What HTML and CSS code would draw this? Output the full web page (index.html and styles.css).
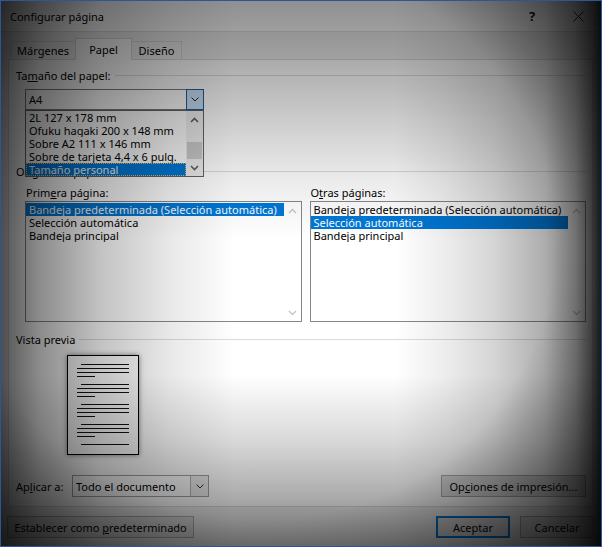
FILE: index.html
```
<!DOCTYPE html>
<html lang="es">
<head>
<meta charset="utf-8">
<title>Configurar página</title>
<link rel="stylesheet" href="styles.css">
</head>
<body>
<div class="dialog">
  <div class="titlebar">
    <span class="title">Configurar página</span>
    <span class="tb-btn help">?</span>
    <span class="tb-btn close"><svg width="11" height="11" viewBox="0 0 11 11"><path d="M0.5 0.5L10.5 10.5M10.5 0.5L0.5 10.5" fill="none" stroke="#222" stroke-width="1"/></svg></span>
  </div>

  <div class="tabs">
    <div class="tab t1">Márgenes</div>
    <div class="tab t2 active">Papel</div>
    <div class="tab t3">Diseño</div>
  </div>

  <div class="panel">
    <div class="group g1"><span>Ta<u>m</u>año del papel:</span><i class="rule"></i></div>

    <div class="combo-wrap">
      <div class="combo edit">
        <span class="value">A4</span>
        <span class="arrow hot"><svg width="8" height="5" viewBox="0 0 8 5"><path d="M0.5 0.5L4 4L7.5 0.5" fill="none" stroke="#1b2b3b" stroke-width="1"/></svg></span>
      </div>
      <div class="popup">
        <ul class="items">
          <li>2L 127 x 178 mm</li>
          <li>Ofuku hagaki 200 x 148 mm</li>
          <li>Sobre A2 111 x 146 mm</li>
          <li>Sobre de tarjeta 4,4 x 6 pulg.</li>
          <li class="sel focus">Tamaño personal</li>
        </ul>
        <div class="vscroll">
          <span class="sbtn"><svg width="9" height="6" viewBox="0 0 9 6"><path d="M1 5L4.5 1.5L8 5" fill="none" stroke="#606060" stroke-width="1.6"/></svg></span>
          <span class="track"><i class="thumb"></i></span>
          <span class="sbtn"><svg width="9" height="6" viewBox="0 0 9 6"><path d="M1 1L4.5 4.5L8 1" fill="none" stroke="#606060" stroke-width="1.6"/></svg></span>
        </div>
      </div>
    </div>

    <div class="group g2"><span>Origen del papel</span><i class="rule"></i></div>

    <div class="sources">
      <div class="col">
        <div class="lbl">Prim<u>e</u>ra página:</div>
        <div class="listbox">
          <ul class="items">
            <li class="sel">Bandeja predeterminada (Selección automática)</li>
            <li>Selección automática</li>
            <li>Bandeja principal</li>
          </ul>
          <div class="vscroll off">
            <span class="sbtn"><svg width="9" height="6" viewBox="0 0 9 6"><path d="M1 5L4.5 1.5L8 5" fill="none" stroke="#c6c6c6" stroke-width="1.4"/></svg></span>
            <span class="sbtn"><svg width="9" height="6" viewBox="0 0 9 6"><path d="M1 1L4.5 4.5L8 1" fill="none" stroke="#c6c6c6" stroke-width="1.4"/></svg></span>
          </div>
        </div>
      </div>
      <div class="col">
        <div class="lbl">O<u>t</u>ras páginas:</div>
        <div class="listbox">
          <ul class="items">
            <li>Bandeja predeterminada (Selección automática)</li>
            <li class="sel">Selección automática</li>
            <li>Bandeja principal</li>
          </ul>
          <div class="vscroll off">
            <span class="sbtn"><svg width="9" height="6" viewBox="0 0 9 6"><path d="M1 5L4.5 1.5L8 5" fill="none" stroke="#c6c6c6" stroke-width="1.4"/></svg></span>
            <span class="sbtn"><svg width="9" height="6" viewBox="0 0 9 6"><path d="M1 1L4.5 4.5L8 1" fill="none" stroke="#c6c6c6" stroke-width="1.4"/></svg></span>
          </div>
        </div>
      </div>
    </div>

    <div class="group g3"><span>Vista previa</span><i class="rule"></i></div>

    <svg class="page" width="72" height="100" viewBox="0 0 72 100">
      <rect x="0.5" y="0.5" width="71" height="99" fill="#fff" stroke="#000" stroke-width="1"/>
      <g fill="#111">
        <rect x="14" y="9" width="48" height="1"/>
        <rect x="10" y="13" width="52" height="1"/>
        <rect x="10" y="17" width="52" height="1"/>
        <rect x="10" y="21" width="18" height="1"/>
        <rect x="14" y="29" width="48" height="1"/>
        <rect x="10" y="33" width="52" height="1"/>
        <rect x="10" y="37" width="52" height="1"/>
        <rect x="10" y="41" width="18" height="1"/>
        <rect x="14" y="49" width="48" height="1"/>
        <rect x="10" y="53" width="52" height="1"/>
        <rect x="10" y="57" width="52" height="1"/>
        <rect x="10" y="61" width="18" height="1"/>
        <rect x="14" y="69" width="48" height="1"/>
        <rect x="10" y="73" width="52" height="1"/>
        <rect x="10" y="77" width="52" height="1"/>
        <rect x="10" y="81" width="18" height="1"/>
        <rect x="14" y="89" width="48" height="1"/>
      </g>
    </svg>

    <div class="apply">
      <span class="lbl">Ap<u>l</u>icar a:</span>
      <div class="combo list">
        <span class="value">Todo el documento</span>
        <span class="arrow"><svg width="8" height="5" viewBox="0 0 8 5"><path d="M0.5 0.5L4 4L7.5 0.5" fill="none" stroke="#303030" stroke-width="1"/></svg></span>
      </div>
      <button class="btn opts"><span>Op<u>c</u>iones de impresión...</span></button>
    </div>
  </div>

  <div class="footer">
    <button class="btn def"><span>Establecer como <u>p</u>redeterminado</span></button>
    <button class="btn ok"><span>Aceptar</span></button>
    <button class="btn cancel"><span>Cancelar</span></button>
  </div>

  <div class="vignette"></div>
</div>
</body>
</html>
```

FILE: styles.css
```
* { box-sizing: border-box; }
html, body { margin: 0; padding: 0; }
body { background: #fff; }

.dialog {
  position: relative;
  width: 602px;
  height: 547px;
  border: 1px solid #2b579a;
  background: #f0f0f0;
  font-family: "Noto Sans", "Open Sans", sans-serif;
  font-size: 11px;
  line-height: 13px;
  color: #000;
  overflow: hidden;
  display: flex;
  flex-direction: column;
}

u { text-decoration: underline; text-underline-offset: 1px; }

/* title bar */
.titlebar {
  flex: none;
  height: 31px;
  display: flex;
  align-items: center;
  background: #fff;
  border-bottom: 1px solid #dedede;
  padding-left: 9px;
}
.title { color: #000; }
.tb-btn {
  width: 46px;
  height: 30px;
  display: flex;
  align-items: center;
  justify-content: center;
}
.help { margin-left: auto; font-size: 13px; font-weight: bold; color: #111; }

/* tabs */
.tabs {
  flex: none;
  position: relative;
  z-index: 1;
  display: flex;
  align-items: flex-end;
  height: 22px;
  margin-top: 6px;
  margin-bottom: -1px;
  padding-left: 9px;
}
.tab {
  height: 19px;
  border: 1px solid #d9d9d9;
  background: #f0f0f0;
  display: flex;
  align-items: center;
  justify-content: center;
}
.t1 { width: 66px; }
.t2 { width: 57px; margin-left: -1px; }
.t3 { width: 51px; margin-left: -1px; }
.tab.active {
  position: relative;
  z-index: 2;
  height: 22px;
  background: #fff;
  border-bottom-color: #fff;
}

/* panel */
.panel {
  flex: none;
  height: 448px;
  margin: 0 8px 0 7px;
  border: 1px solid #d9d9d9;
  background: #fff;
  padding: 9px 6px 0 7px;
  display: flex;
  flex-direction: column;
}

.group {
  flex: none;
  display: flex;
  align-items: flex-start;
  height: 13px;
}
.group .rule {
  flex: 1;
  height: 1px;
  background: #dcdcdc;
  margin: 6px 0 0 4px;
}
.g2 { margin-top: 55px; }
.g3 { margin-top: 11px; }

/* combos */
.combo-wrap {
  position: relative;
  z-index: 3;
  flex: none;
  width: 179px;
  height: 21px;
  margin: 7px 0 0 9px;
}
.combo {
  display: flex;
  align-items: center;
  border: 1px solid #7a7a7a;
  background: #fff;
}
.combo.edit { height: 21px; }
.combo .value { flex: 1; padding-left: 3px; white-space: nowrap; }
.combo .arrow {
  display: flex;
  align-items: center;
  justify-content: center;
}
.combo .arrow.hot {
  width: 18px;
  height: 21px;
  margin: -1px -1px -1px 0;
  border: 1px solid #1a5e9f;
  background: #c9e0f5;
}

.popup {
  position: absolute;
  top: 100%;
  left: 0;
  width: 179px;
  height: 67px;
  border: 1px solid #646464;
  background: #fff;
  display: flex;
}
.items { list-style: none; margin: 0; padding: 0; flex: 1; }
.items li { height: 13px; padding-left: 3px; white-space: nowrap; overflow: hidden; }
.items li.sel { background: #0078d7; color: #fff; }
.items li.focus { outline: 1px dotted #e8c060; outline-offset: -1px; }

.vscroll {
  width: 17px;
  flex: none;
  display: flex;
  flex-direction: column;
  justify-content: space-between;
  background: #f0f0f0;
}
.vscroll.off { background: #fff; }
.sbtn {
  height: 17px;
  display: flex;
  align-items: center;
  justify-content: center;
}
.track {
  flex: 1;
  display: flex;
  flex-direction: column;
  justify-content: flex-end;
  align-items: center;
}
.thumb { display: block; width: 15px; height: 17px; background: #cdcdcd; }

/* paper sources */
.sources {
  flex: none;
  display: flex;
  gap: 8px;
  margin: 8px 0 0 9px;
}
.col { width: 277px; }
.col .lbl { padding-left: 1px; margin-bottom: 2px; }
.listbox {
  height: 121px;
  border: 1px solid #828790;
  background: #fff;
  display: flex;
}
.listbox .items { padding-top: 1px; }

/* preview */
.page {
  display: block;
  flex: none;
  margin: 9px 0 0 51px;
  box-shadow: 0 0 5px rgba(0, 0, 0, 0.5);
}

/* apply row */
.apply {
  flex: none;
  display: flex;
  align-items: center;
  height: 22px;
  margin-top: 20px;
}
.apply .lbl { width: 56px; }
.combo.list {
  width: 137px;
  height: 22px;
  border-color: #a0a0a0;
}
.combo.list .arrow {
  width: 18px;
  height: 20px;
  border-left: 1px solid #b4b4b4;
  background: #ececec;
}

.btn {
  font: inherit;
  color: #000;
  height: 22px;
  padding: 0;
  border: 1px solid #adadad;
  background: #e1e1e1;
  display: flex;
  align-items: center;
  justify-content: center;
  white-space: nowrap;
}
.opts { width: 145px; margin-left: auto; }

/* footer */
.footer {
  flex: 1;
  display: flex;
  align-items: flex-start;
  padding: 9px 7px 0 6px;
}
.def { width: 187px; }
.ok { width: 74px; margin-left: auto; border: 2px solid #0078d7; }
.cancel { width: 74px; margin-left: 10px; }

/* photographic vignette over the whole screenshot */
.vignette {
  position: absolute;
  inset: -1px;
  z-index: 10;
  pointer-events: none;
  background:
    radial-gradient(ellipse 420px 400px at 260px 240px,
      rgba(0,0,0,0) 0%, rgba(0,0,0,0) 70%, rgba(0,0,0,.18) 85%,
      rgba(0,0,0,.38) 100%, rgba(0,0,0,.5) 115%),
    linear-gradient(to right,
      rgba(0,0,0,.68) 0px, rgba(0,0,0,.56) 20px, rgba(0,0,0,.45) 40px,
      rgba(0,0,0,.24) 100px, rgba(0,0,0,.09) 170px, rgba(0,0,0,0) 235px,
      rgba(0,0,0,0) 395px, rgba(0,0,0,.07) 445px, rgba(0,0,0,.17) 495px,
      rgba(0,0,0,.32) 545px, rgba(0,0,0,.52) 575px, rgba(0,0,0,.72) 592px,
      rgba(0,0,0,.9) 602px),
    linear-gradient(to bottom,
      rgba(0,0,0,.44) 0px, rgba(0,0,0,.33) 60px, rgba(0,0,0,.2) 120px,
      rgba(0,0,0,.08) 180px, rgba(0,0,0,0) 240px,
      rgba(0,0,0,0) 375px, rgba(0,0,0,.15) 440px, rgba(0,0,0,.34) 500px,
      rgba(0,0,0,.54) 547px);
}
```
